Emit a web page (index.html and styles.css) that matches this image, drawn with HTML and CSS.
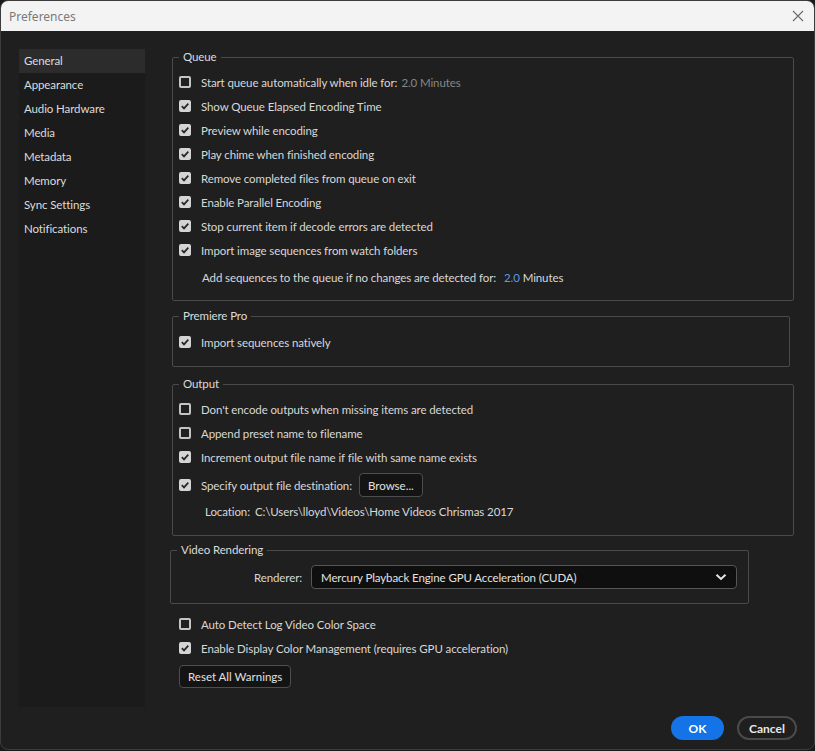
FILE: index.html
```html
<!DOCTYPE html>
<html>
<head>
<meta charset="utf-8">
<link rel="stylesheet" href="styles.css">
</head>
<body>
<div class="window">
  <div class="titlebar">
    <span class="title">Preferences</span>
    <svg class="close" width="12" height="12" viewBox="0 0 12 12"><path d="M1 1L11 11M11 1L1 11" stroke="#6a6a6a" stroke-width="1.1" fill="none"/></svg>
  </div>
  <div class="content">
    <nav class="sidebar">
      <div class="nav-item active">General</div>
      <div class="nav-item">Appearance</div>
      <div class="nav-item">Audio Hardware</div>
      <div class="nav-item">Media</div>
      <div class="nav-item">Metadata</div>
      <div class="nav-item">Memory</div>
      <div class="nav-item">Sync Settings</div>
      <div class="nav-item">Notifications</div>
    </nav>
    <main class="main">
      <fieldset class="group queue">
        <legend>Queue</legend>
        <div class="row"><span class="cb"></span><span>Start queue automatically when idle for:</span><span class="dim">2.0 Minutes</span></div>
        <div class="row"><span class="cb on"><svg viewBox="0 0 12 12"><path d="M2.8 6.2L5 8.4L9.3 3.6" /></svg></span><span>Show Queue Elapsed Encoding Time</span></div>
        <div class="row"><span class="cb on"><svg viewBox="0 0 12 12"><path d="M2.8 6.2L5 8.4L9.3 3.6" /></svg></span><span>Preview while encoding</span></div>
        <div class="row"><span class="cb on"><svg viewBox="0 0 12 12"><path d="M2.8 6.2L5 8.4L9.3 3.6" /></svg></span><span>Play chime when finished encoding</span></div>
        <div class="row"><span class="cb on"><svg viewBox="0 0 12 12"><path d="M2.8 6.2L5 8.4L9.3 3.6" /></svg></span><span>Remove completed files from queue on exit</span></div>
        <div class="row"><span class="cb on"><svg viewBox="0 0 12 12"><path d="M2.8 6.2L5 8.4L9.3 3.6" /></svg></span><span>Enable Parallel Encoding</span></div>
        <div class="row"><span class="cb on"><svg viewBox="0 0 12 12"><path d="M2.8 6.2L5 8.4L9.3 3.6" /></svg></span><span>Stop current item if decode errors are detected</span></div>
        <div class="row"><span class="cb on"><svg viewBox="0 0 12 12"><path d="M2.8 6.2L5 8.4L9.3 3.6" /></svg></span><span>Import image sequences from watch folders</span></div>
        <div class="row sub"><span>Add sequences to the queue if no changes are detected for:</span><span class="val"><span class="blue">2.0</span> Minutes</span></div>
      </fieldset>

      <fieldset class="group premiere">
        <legend>Premiere Pro</legend>
        <div class="row"><span class="cb on"><svg viewBox="0 0 12 12"><path d="M2.8 6.2L5 8.4L9.3 3.6" /></svg></span><span>Import sequences natively</span></div>
      </fieldset>

      <fieldset class="group output">
        <legend>Output</legend>
        <div class="row"><span class="cb"></span><span>Don't encode outputs when missing items are detected</span></div>
        <div class="row"><span class="cb"></span><span>Append preset name to filename</span></div>
        <div class="row"><span class="cb on"><svg viewBox="0 0 12 12"><path d="M2.8 6.2L5 8.4L9.3 3.6" /></svg></span><span>Increment output file name if file with same name exists</span></div>
        <div class="row tall"><span class="cb on"><svg viewBox="0 0 12 12"><path d="M2.8 6.2L5 8.4L9.3 3.6" /></svg></span><span>Specify output file destination:</span><button class="btn browse">Browse...</button></div>
        <div class="row location"><span>Location:</span><span>C:\Users\lloyd\Videos\Home Videos Chrismas 2017</span></div>
      </fieldset>

      <fieldset class="group video">
        <legend>Video Rendering</legend>
        <div class="select-row">
          <span class="label">Renderer:</span>
          <div class="select">
            <span>Mercury Playback Engine GPU Acceleration (CUDA)</span>
            <svg width="12" height="8" viewBox="0 0 12 8"><path d="M1.5 1.8L6 6L10.5 1.8" stroke="#e6e6e6" stroke-width="2" fill="none"/></svg>
          </div>
        </div>
      </fieldset>

      <div class="loose">
        <div class="row"><span class="cb"></span><span>Auto Detect Log Video Color Space</span></div>
        <div class="row"><span class="cb on"><svg viewBox="0 0 12 12"><path d="M2.8 6.2L5 8.4L9.3 3.6" /></svg></span><span>Enable Display Color Management (requires GPU acceleration)</span></div>
        <button class="btn reset">Reset All Warnings</button>
      </div>
    </main>
  </div>
  <div class="footer">
    <button class="ok">OK</button>
    <button class="cancel">Cancel</button>
  </div>
</div>
</body>
</html>
```

FILE: styles.css
```css
* { box-sizing: border-box; }
html, body { margin: 0; padding: 0; }
body {
  background: #1a1a1a;
  width: 815px;
  height: 751px;
  overflow: hidden;
  font-family: Lato, "Open Sans", sans-serif;
  font-size: 11.5px;
  letter-spacing: -0.1px;
  color: #d8d8d8;
}
.window {
  width: 815px;
  height: 750px;
  background: #1f1f1f;
  border: 1px solid #3c3c3c;
  border-radius: 8px;
  overflow: hidden;
  display: flex;
  flex-direction: column;
}
.titlebar {
  height: 30px;
  background: #f3f3f3;
  display: flex;
  align-items: center;
  justify-content: space-between;
  padding: 0 10px 0 8px;
  flex: none;
  letter-spacing: 0;
}
.title {
  font-family: "Noto Sans", "Open Sans", sans-serif;
  font-size: 12px;
  color: #7a7a7a;
}
.close { width: 12px; height: 12px; }
.content {
  display: grid;
  grid-template-columns: 126px 622px;
  column-gap: 27px;
  padding: 18px 0 0 18px;
  height: 676px;
  flex: none;
}
.sidebar {
  background: #1b1b1b;
  height: 658px;
}
.nav-item {
  height: 24px;
  line-height: 24px;
  padding-left: 5px;
  color: #dcdcdc;
}
.nav-item.active { background: #2c2c2c; }
.main { display: flex; flex-direction: column; }
.group {
  border: 1px solid #4a4a4a;
  border-radius: 2px;
  margin: 0;
  padding: 0 6px;
  min-width: 0;
}
.group legend {
  padding: 0 4px;
  margin-left: 0;
  line-height: 16px;
  height: 16px;
  color: #dcdcdc;
}
.row {
  height: 24px;
  display: flex;
  align-items: center;
  white-space: nowrap;
}
.cb {
  width: 12px;
  height: 12px;
  border: 2px solid #c4c4c4;
  border-radius: 2px;
  margin-right: 10px;
  flex: none;
  display: flex;
  align-items: center;
  justify-content: center;
}
.cb.on { background: #d4d4d4; border-color: #d4d4d4; }
.cb svg { width: 12px; height: 12px; flex: none; }
.cb svg path { stroke: #262626; stroke-width: 1.7; fill: none; }
.dim { color: #878787; margin-left: 4px; }
.blue { color: #5b9be6; }
.sub { padding-left: 23px; }
.sub .val { margin-left: 8px; }
.queue { padding-top: 5px; padding-bottom: 11px; }
.queue .sub { margin-top: 3px; }
.premiere { margin-top: 7px; margin-right: 4px; padding-top: 6px; padding-bottom: 12px; }
.output { margin-top: 9px; padding-top: 5px; padding-bottom: 14px; }
.row.tall { height: 32px; }
.btn {
  font: inherit;
  color: #e0e0e0;
  background: #141414;
  border: 1px solid #4e4e4e;
  border-radius: 4px;
  height: 24px;
  padding: 0 8px;
}
.browse { margin-left: 7px; }
.location { height: 20px; padding-left: 26px; }
.location span:first-child { margin-right: 5px; }
.video { margin-top: 6px; margin-left: -2px; margin-right: 45px; padding-top: 5px; padding-bottom: 12px; }
.select-row { display: flex; align-items: center; height: 28px; }
.label { width: 127px; text-align: right; padding-right: 2px; }
.select {
  margin-left: 7px;
  width: 426px;
  height: 24px;
  background: #0f0f0f;
  border: 1px solid #555;
  border-radius: 4px;
  display: flex;
  align-items: center;
  justify-content: space-between;
  padding: 0 9px 0 9px;
  color: #e2e2e2;
}
.loose { padding: 8px 0 0 7px; display: flex; flex-direction: column; align-items: flex-start; }
.reset { margin-top: 5px; height: 23px; }
.footer {
  display: flex;
  justify-content: flex-end;
  gap: 13px;
  padding: 9px 17px 0 0;
}
.footer button {
  font: inherit;
  font-size: 12px;
  font-weight: bold;
  height: 24px;
  border-radius: 12px;
}
.ok {
  width: 53px;
  background: #1473e6;
  color: #fff;
  border: none;
}
.cancel {
  width: 60px;
  background: transparent;
  color: #e8e8e8;
  border: 2px solid #4a4a4a;
}
```
